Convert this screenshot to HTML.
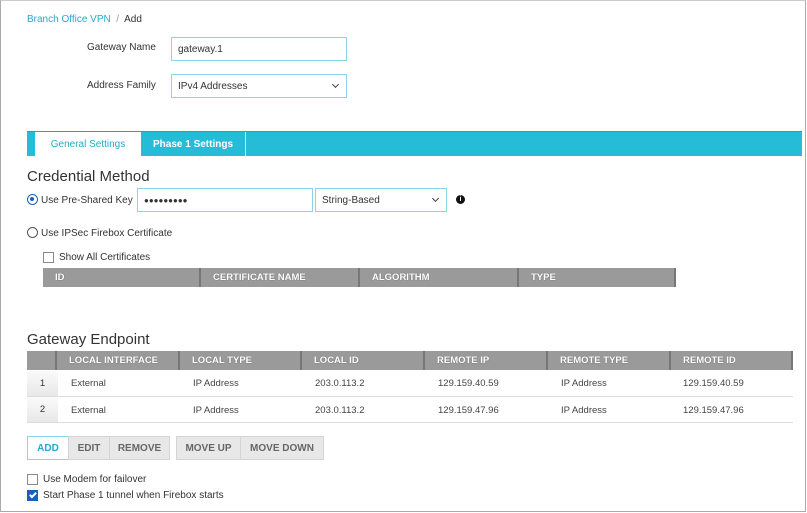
<!DOCTYPE html>
<html><head><meta charset="utf-8"><style>
*{box-sizing:border-box;margin:0;padding:0}
body{width:807px;height:513px;background:#fff;font-family:"Liberation Sans",sans-serif;font-size:10px;color:#333;position:relative;overflow:hidden}
.frame{position:absolute;left:0;top:0;width:806px;height:512px;border:1px solid #aaa;border-top:1px solid #ccc}
.a{position:absolute;white-space:nowrap}
.inp{position:absolute;border:1px solid #8ad6e6;background:#fff;padding-left:6px;display:flex;align-items:center;font-size:10px}
.sel::after{content:"";position:absolute;right:8px;top:7px;width:4px;height:4px;border-right:1px solid #444;border-bottom:1px solid #444;transform:rotate(45deg)}
.th{position:absolute;background:#9a9a9a;color:#fff;font-weight:bold;font-size:9.5px;display:flex;align-items:center;padding-left:12px;border-right:2px solid #777;text-shadow:0 0 1px #555}
.btn{position:absolute;top:436px;height:24px;background:#e8e8e8;border:1px solid #d4d4d4;color:#666;font-weight:bold;font-size:10px;display:flex;align-items:center;justify-content:center}
.rad{position:absolute;width:11px;height:11px;border:1.5px solid #555;border-radius:50%}
.cb{position:absolute;width:11px;height:11px;border:1px solid #888;background:#fff}
.td{position:absolute;font-size:9.5px;color:#444}
</style></head><body>
<div class="frame"></div>
<div class="a" style="left:27px;top:14px;font-size:10px;color:#27a9c8">Branch Office VPN <span style="color:#999">&nbsp;/&nbsp;</span> <span style="color:#333">Add</span></div>
<div class="a" style="left:87px;top:42px">Gateway Name</div>
<div class="inp" style="left:171px;top:37px;width:176px;height:24px">gateway.1</div>
<div class="a" style="left:87px;top:80px">Address Family</div>
<div class="inp sel" style="left:171px;top:74px;width:176px;height:24px">IPv4 Addresses</div>

<div class="a" style="left:27px;top:131px;width:775px;height:25px;background:#25bcd8;border-top:1px solid #1aa5c4"></div>
<div class="a" style="left:35px;top:132px;width:106px;height:24px;background:#fff;color:#27a9c8;display:flex;align-items:center;justify-content:center">General Settings</div>
<div class="a" style="left:141px;top:132px;width:105px;height:24px;color:#fff;font-weight:bold;display:flex;align-items:center;justify-content:center;border-right:1px solid #bfeef7">Phase 1 Settings</div>

<div class="a" style="left:27px;top:168px;font-size:15px;color:#333">Credential Method</div>
<div class="rad" style="left:27px;top:194px;border-color:#1a5fc0"><div style="position:absolute;left:2px;top:2px;width:4px;height:4px;border-radius:50%;background:#1a5fc0"></div></div>
<div class="a" style="left:41px;top:195px">Use Pre-Shared Key</div>
<div class="inp" style="left:137px;top:188px;width:176px;height:24px;font-size:8px;letter-spacing:0px">●●●●●●●●●</div>
<div class="inp sel" style="left:315px;top:188px;width:132px;height:24px">String-Based</div>
<div class="a" style="left:456px;top:195px;width:9px;height:9px;border-radius:50%;background:#111;color:#fff;font-size:7px;font-weight:bold;text-align:center;line-height:9px">i</div>
<div class="rad" style="left:27px;top:227px"></div>
<div class="a" style="left:41px;top:228px">Use IPSec Firebox Certificate</div>
<div class="cb" style="left:43px;top:252px"></div>
<div class="a" style="left:59px;top:252px">Show All Certificates</div>
<div class="th" style="left:43px;top:268px;width:158px;height:19px">ID</div>
<div class="th" style="left:201px;top:268px;width:159px;height:19px">CERTIFICATE NAME</div>
<div class="th" style="left:360px;top:268px;width:159px;height:19px">ALGORITHM</div>
<div class="th" style="left:519px;top:268px;width:157px;height:19px">TYPE</div>

<div class="a" style="left:27px;top:331px;font-size:15px;color:#333">Gateway Endpoint</div>
<div class="th" style="left:27px;top:351px;width:30px;height:19px"></div>
<div class="th" style="left:57px;top:351px;width:123px;height:19px">LOCAL INTERFACE</div>
<div class="th" style="left:180px;top:351px;width:122px;height:19px">LOCAL TYPE</div>
<div class="th" style="left:302px;top:351px;width:123px;height:19px">LOCAL ID</div>
<div class="th" style="left:425px;top:351px;width:123px;height:19px">REMOTE IP</div>
<div class="th" style="left:548px;top:351px;width:123px;height:19px">REMOTE TYPE</div>
<div class="th" style="left:671px;top:351px;width:122px;height:19px">REMOTE ID</div>
<div class="a" style="left:27px;top:371px;width:31px;height:25px;background:linear-gradient(#fafafa,#e8e8e8);text-align:center;line-height:25px;font-size:9.5px">1</div>
<div class="a" style="left:27px;top:397px;width:31px;height:25px;background:linear-gradient(#fafafa,#e8e8e8);text-align:center;line-height:25px;font-size:9.5px">2</div>
<div class="a" style="left:27px;top:396px;width:766px;height:1px;background:#ddd"></div>
<div class="a" style="left:27px;top:422px;width:766px;height:1px;background:#ddd"></div>
<div class="td" style="left:71px;top:378px">External</div><div class="td" style="left:193px;top:378px">IP Address</div><div class="td" style="left:315px;top:378px">203.0.113.2</div><div class="td" style="left:438px;top:378px">129.159.40.59</div><div class="td" style="left:561px;top:378px">IP Address</div><div class="td" style="left:683px;top:378px">129.159.40.59</div>
<div class="td" style="left:71px;top:405px">External</div><div class="td" style="left:193px;top:405px">IP Address</div><div class="td" style="left:315px;top:405px">203.0.113.2</div><div class="td" style="left:438px;top:405px">129.159.47.96</div><div class="td" style="left:561px;top:405px">IP Address</div><div class="td" style="left:683px;top:405px">129.159.47.96</div>

<div class="btn" style="left:27px;width:42px;background:#fff;border-color:#8ad6e6;color:#27a9c8">ADD</div>
<div class="btn" style="left:68px;width:42px">EDIT</div>
<div class="btn" style="left:109px;width:61px">REMOVE</div>
<div class="btn" style="left:176px;width:65px">MOVE UP</div>
<div class="btn" style="left:240px;width:84px">MOVE DOWN</div>

<div class="cb" style="left:27px;top:474px"></div>
<div class="a" style="left:43px;top:474px">Use Modem for failover</div>
<div class="cb" style="left:27px;top:490px;background:#1a5fc0;border-color:#1a5fc0"><div style="position:absolute;left:3px;top:0px;width:4px;height:7px;border-right:2px solid #fff;border-bottom:2px solid #fff;transform:rotate(45deg)"></div></div>
<div class="a" style="left:43px;top:490px">Start Phase 1 tunnel when Firebox starts</div>
</body></html>
